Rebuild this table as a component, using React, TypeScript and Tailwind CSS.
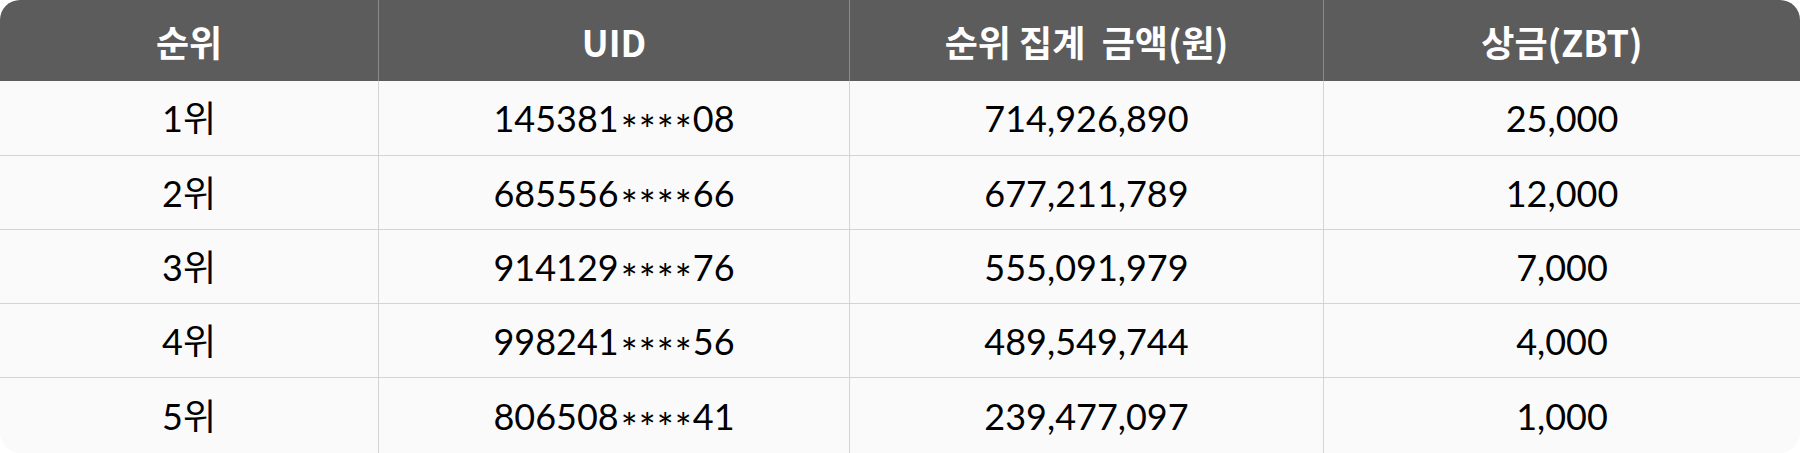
import React from "react";

const rows = [
    { rank: "1위", uid: ["145381", "08"], amount: "714,926,890", prize: "25,000" },
    { rank: "2위", uid: ["685556", "66"], amount: "677,211,789", prize: "12,000" },
    { rank: "3위", uid: ["914129", "76"], amount: "555,091,979", prize: "7,000" },
    { rank: "4위", uid: ["998241", "56"], amount: "489,549,744", prize: "4,000" },
    { rank: "5위", uid: ["806508", "41"], amount: "239,477,097", prize: "1,000" },
];

const cols = "grid grid-cols-[378px_471px_474px_1fr]";

const App = () => {
    return (
        <div className="w-[1800px] h-[453px] bg-white font-['Lato','Noto_Sans_CJK_KR',sans-serif]">
            <div className="h-full flex flex-col rounded-[20px] overflow-hidden bg-[#fafafa]">
                {/* header */}
                <div className={`${cols} h-[81px] bg-[#5c5c5c] text-white font-bold text-[36px] font-['Noto_Sans_CJK_KR',sans-serif]`}>
                    <div className="flex items-center justify-center">순위</div>
                    <div className="flex items-center justify-center border-l border-[#8a8a8a]">UID</div>
                    <div className="flex items-center justify-center border-l border-[#8a8a8a] whitespace-pre">순위 집계  금액(원)</div>
                    <div className="flex items-center justify-center border-l border-[#8a8a8a]">상금(ZBT)</div>
                </div>

                {rows.map((r, i) => (
                    <div key={r.rank}
                        className={`${cols} text-[36px] text-black ${i === 0 ? "" : "border-t border-[#d4d4d4]"} ${i === rows.length - 1 ? "flex-1" : "h-[74px]"}`}>
                        <div className="flex items-center justify-center">{r.rank}</div>
                        <div className="flex items-center justify-center border-l border-[#d4d4d4]">
                            {r.uid[0]}<span className="relative top-[12px] text-[40px] leading-none tracking-[1px] pl-[2px]">****</span>{r.uid[1]}
                        </div>
                        <div className="flex items-center justify-center border-l border-[#d4d4d4]">{r.amount}</div>
                        <div className="flex items-center justify-center border-l border-[#d4d4d4]">{r.prize}</div>
                    </div>
                ))}
            </div>
        </div>
    );
};

export default App;
